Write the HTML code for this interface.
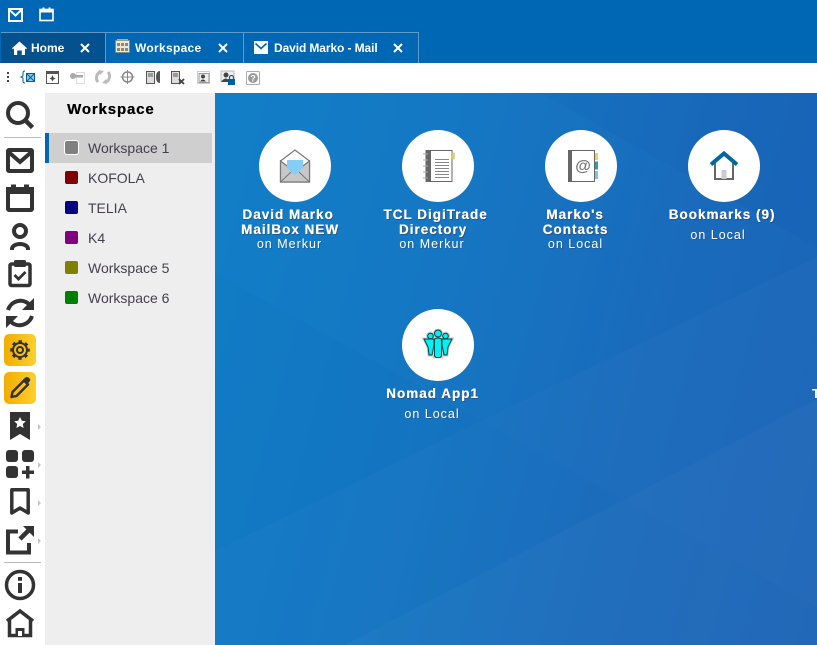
<!DOCTYPE html>
<html><head><meta charset="utf-8"><style>
*{box-sizing:border-box}
html,body{margin:0;padding:0;width:817px;height:645px;overflow:hidden;background:#fff;font-family:"Liberation Sans",sans-serif}
.a{position:absolute}
#top{left:0;top:0;width:817px;height:63px;background:#0067b5}
.tab{position:absolute;top:32px;height:31px;border:1px solid #5c9ac9;border-bottom:none;border-left:none;color:#fff;font-size:12px;font-weight:bold;line-height:30px}
.tab span{position:absolute;top:0;white-space:nowrap}
.tab svg{position:absolute}
.item{position:absolute;left:45px;width:167px;height:30px;font-size:14px;color:#453f4c;line-height:30px;padding-left:43px}
.sw{position:absolute;left:20px;top:8px;width:13px;height:13px;border-radius:2px}
#main{left:215px;top:93px;width:602px;height:552px;overflow:hidden;background:linear-gradient(105deg,#117fc7 0%,#1577c3 35%,#1a6abb 70%,#1b63b7 100%)}
.c{position:absolute;width:72px;height:72px;border-radius:50%;background:#fff}
.l{position:absolute;transform:translateX(-50%);color:#fff;line-height:15px;white-space:nowrap}
.b{font-size:13.5px;font-weight:bold;letter-spacing:1px;text-shadow:.3px 0 0 #fff,1px 1px 0 rgba(70,40,60,.45)}
.n{font-size:12.5px;letter-spacing:1px;text-shadow:1px 1px 0 rgba(70,40,60,.3)}
</style></head><body>
<div class="a" id="top"></div>
<svg class="a" style="left:8px;top:8px" width="15" height="14" viewBox="0 0 15 14"><rect x="1" y="1" width="13" height="12" fill="none" stroke="#fff" stroke-width="2"/><path d="M1 1.500 7.500 7.500 14 1.500" fill="none" stroke="#fff" stroke-width="2"/></svg>
<svg class="a" style="left:39px;top:7px" width="15" height="15" viewBox="0 0 15 15"><rect x="1" y="2.500" width="13" height="11" fill="none" stroke="#fff" stroke-width="1.600"/><rect x="1" y="3" width="13" height="2.500" fill="#fff"/><rect x="3.500" y="0.500" width="2" height="3" fill="#fff"/><rect x="9.500" y="0.500" width="2" height="3" fill="#fff"/></svg>

<div class="tab" style="left:1px;width:105px;background:#03528f"><svg style="left:11px;top:8px" width="15" height="15" viewBox="0 0 15 15"><path d="M7.500 .5 15 7.200l-1 1-1-.8V14H9.800V9.500H5.200V14H2V7.400l-1 .8-1-1z" fill="#fff"/><path d="M6.300 10.500h2.400V14H6.300z" fill="#03528f"/></svg><span style="left:30px">Home</span><svg style="left:79px;top:10px" width="10" height="10" viewBox="0 0 10 10"><path d="m1 1 8 8m0-8-8 8" stroke="#fff" stroke-width="2"/></svg></div>
<div class="tab" style="left:106px;width:138px"><svg style="left:9px;top:5px" width="16" height="16" viewBox="0 0 16 16"><rect x=".5" y="2.500" width="14" height="12" fill="#ece8dc" stroke="#888"/><path d="M2 1h11v1.500H2z" fill="#9b9"/><path d="M2 5h3v3H2zM6 5h3v3H6zM10 5h3v3h-3zM2 10h3v3H2zM6 10h3v3H6zM10 10h3v3h-3z" fill="#8a8a70"/></svg><span style="left:29px;letter-spacing:.3px">Workspace</span><svg style="left:112px;top:10px" width="10" height="10" viewBox="0 0 10 10"><path d="m1 1 8 8m0-8-8 8" stroke="#fff" stroke-width="2"/></svg></div>
<div class="tab" style="left:244px;width:175px"><svg style="left:10px;top:8px" width="15" height="14" viewBox="0 0 15 14"><rect width="14" height="13" fill="#fff"/><path d="M1.500 2.500 7 7.500l5.500-5" fill="none" stroke="#0067b5" stroke-width="1.600"/></svg><span style="left:30px;letter-spacing:-.1px">David Marko - Mail</span><svg style="left:149px;top:10px" width="10" height="10" viewBox="0 0 10 10"><path d="m1 1 8 8m0-8-8 8" stroke="#fff" stroke-width="2"/></svg></div>

<!-- toolbar -->
<svg class="a" style="left:0;top:63px" width="270" height="30" viewBox="0 0 270 30">
<path d="M7 9h2v2H7zM7 13h2v2H7zM7 17h2v2H7z" fill="#444"/>
<path d="M25 8q-2 0-2 2v3l-2 1 2 1v3q0 2 2 2" fill="none" stroke="#00609f"/><rect x="26.500" y="10.500" width="8" height="8" fill="#8cc6ea" stroke="#00609f"/><path d="m27 11 7 7m0-7-7 7" stroke="#00609f"/>
<rect x="46.500" y="8.500" width="12" height="12" fill="#fff" stroke="#555"/><rect x="46" y="8" width="13" height="3" fill="#555"/><path d="M52.500 12l1 2.500 2 1-2 1-1 2-1-2-2-1 2-1z" fill="#444"/>
<rect x="76.500" y="9.500" width="8" height="11" fill="#fff" stroke="#ddd"/><circle cx="73" cy="13" r="3" fill="#aaa"/><rect x="74" y="12" width="9" height="2.500" fill="#aaa"/>
<path d="M98 19a6.500 6.500 0 0 1 2-10M108 9a6.500 6.500 0 0 1-2 10" fill="none" stroke="#bbb" stroke-width="3"/><path d="M99 7l5 1-4 4zM107 21l-5-1 4-4z" fill="#bbb"/>
<circle cx="127.500" cy="14" r="5" fill="none" stroke="#888" stroke-width="1.500"/><path d="M127.500 7v14M120.500 14h14" stroke="#888"/>
<rect x="146.500" y="8.500" width="8" height="12" fill="#ddd" stroke="#555"/><path d="M148 11h5M148 13h5" stroke="#555"/><path d="M160 8q-4 0-4 6t4 6z" fill="#555"/>
<rect x="171.500" y="8.500" width="8" height="12" fill="#ddd" stroke="#555"/><path d="M173 11h5M173 13h5" stroke="#555"/><path d="m179 16 5 5m0-5-5 5" stroke="#444" stroke-width="1.800"/>
<rect x="197.500" y="8.500" width="12" height="12" fill="#fff" stroke="#ccc"/><rect x="199" y="10.500" width="10" height="9" fill="#eee" stroke="#999"/><circle cx="203" cy="13.500" r="2" fill="#444"/><path d="M200 18.500q3-4 6 0z" fill="#444"/>
<rect x="221" y="8" width="13" height="10" fill="#eee" stroke="#bbb"/><circle cx="226" cy="12" r="2.500" fill="#444"/><path d="M221 19q5-7 9 0z" fill="#444"/><rect x="228" y="16" width="7" height="6" fill="#00609f"/><path d="M229.500 16v-1.500a2 2 0 0 1 4 0V16" fill="none" stroke="#00609f" stroke-width="1.200"/>
<rect x="246.500" y="8.500" width="13" height="13" rx="1" fill="#fff" stroke="#aaa"/><circle cx="253" cy="15" r="5" fill="#999"/><text x="253" y="18.500" text-anchor="middle" font-size="9" font-weight="bold" fill="#fff" font-family="Liberation Sans">?</text>
</svg>

<!-- left rail -->
<svg class="a" style="left:0;top:93px" width="45" height="552" viewBox="0 93 45 552">
<g fill="none" stroke="#333" stroke-width="4">
<circle cx="18" cy="113" r="10"/><path d="m25.500 120.500 7 7" stroke-width="4.500"/>
<rect x="8" y="150" width="24" height="21" rx="1"/><path d="M8 151.500l12 10.500 12-10.500"/>
<rect x="8" y="189" width="24" height="21" rx="1"/>
<circle cx="20" cy="231" r="6"/><path d="M12 250v-1a8 5 0 0 1 16 0v1"/>
<rect x="10" y="264" width="20" height="21.500" rx="1.500" stroke-width="3.500"/><path d="m14.500 275 4 4 7-7" stroke-width="2.800"/>
<path d="M8 310a13 13 0 0 1 21-6M32 316a13 13 0 0 1-21 6"/>
<circle cx="20" cy="585" r="13.500" stroke-width="3.500"/>
<path d="M7 621 20 611l13 10M9.500 620v15.500h21V620" stroke-width="3.500"/>
</g>
<path d="M15.500 636v-8h9v8z" fill="#333"/><rect x="18" y="631" width="4" height="5" fill="#fff"/>
<path d="M6 187h28v7H6z" fill="#333"/>
<rect x="11" y="184.500" width="5" height="4" fill="#333"/><rect x="24" y="184.500" width="5" height="4" fill="#333"/>
<rect x="14" y="260" width="12" height="7" rx="1.500" fill="#333"/>
<path d="M34 298v12H22zM6 328v-12h12z" fill="#333"/>
<defs><linearGradient id="y" x1="0" x2="1"><stop offset="0" stop-color="#f3ab00"/><stop offset="1" stop-color="#fdd02e"/></linearGradient></defs>
<rect x="4" y="334" width="32" height="32" rx="5" fill="url(#y)"/>
<rect x="4" y="372" width="32" height="32" rx="5" fill="url(#y)"/>
<circle cx="20" cy="350" r="3" fill="none" stroke="#333" stroke-width="2"/><circle cx="20" cy="350" r="7" fill="none" stroke="#333" stroke-width="2"/><circle cx="20" cy="350" r="8.800" fill="none" stroke="#333" stroke-width="2" stroke-dasharray="3.400 3.500" stroke-dashoffset="1.700"/>
<path d="m11.500 397 1-5 11.500-11.500 4 4L16.500 396z" fill="none" stroke="#333" stroke-width="2.400" stroke-linejoin="round"/><path d="m23 379.500 2.500-2q1.500-1 3 0l1 1q1.500 1.500 0 3l-2 2.500z" fill="#333"/>
<path d="M10 412h20v28l-10-6-10 6z" fill="#333"/><path d="m20 417 1.800 3.700 4 .5-3 2.800.8 4-3.600-2-3.600 2 .8-4-3-2.800 4-.5z" fill="#fff"/>
<rect x="6" y="450" width="12" height="12" rx="3" fill="#333"/><rect x="22" y="450" width="12" height="12" rx="3" fill="#333"/><rect x="6" y="466" width="12" height="12" rx="3" fill="#333"/><path d="M26 466h3.500v4.500H34v3.500h-4.500v4.500H26V474h-4v-3.500h4z" fill="#333"/>
<path d="M11.800 489.800h16.400v23.200l-8.200-5-8.200 5z" fill="none" stroke="#333" stroke-width="3.500" stroke-linejoin="round"/>
<path d="M18 531.500H8v21h21V543" fill="none" stroke="#333" stroke-width="4"/><path d="m20 539 10-10" stroke="#333" stroke-width="4.500"/><path d="M23 526h11v11z" fill="#333"/>
<rect x="18" y="583" width="4" height="10" fill="#333"/><rect x="18" y="577" width="4" height="3.800" fill="#333"/>
<path d="M4 137.500h37M4 562.500h37" stroke="#bbb"/>
<path d="M38 424v6l3-3zM38 462v6l3-3zM38 500v6l3-3zM38 538v6l3-3z" fill="#c4c4c4"/>
</svg>

<!-- side panel -->
<div class="a" style="left:45px;top:93px;width:170px;height:552px;background:#eee"></div>
<div class="a" style="left:67px;top:101px;font-size:15px;font-weight:bold;color:#000;letter-spacing:.85px;text-shadow:.3px 0 0 #000">Workspace</div>
<div class="a" style="left:45px;top:133px;width:167px;height:30px;background:#cfcfcf;border-left:4px solid #0067b5"></div>
<div class="item" style="top:133px"><i class="sw" style="background:#808080;outline:1px solid #fff"></i>Workspace 1</div>
<div class="item" style="top:163px"><i class="sw" style="background:#800000"></i>KOFOLA</div>
<div class="item" style="top:193px"><i class="sw" style="background:#000080"></i>TELIA</div>
<div class="item" style="top:223px"><i class="sw" style="background:#800080"></i>K4</div>
<div class="item" style="top:253px"><i class="sw" style="background:#808000"></i>Workspace 5</div>
<div class="item" style="top:283px"><i class="sw" style="background:#008000"></i>Workspace 6</div>

<!-- main -->
<div class="a" id="main">
<svg class="a" style="left:0;top:0" width="602" height="552" viewBox="0 0 602 552">
<path d="M326 0 602 155V0z" fill="#0a50a8" opacity=".08"/>
<path d="M0 180 602 514V552H0z" fill="#0060a8" opacity=".05"/>
<path d="M0 458 602 164V552H0z" fill="#fff" opacity=".02"/>
<path d="M130 552 602 306V552z" fill="#fff" opacity=".025"/>
</svg>

<div class="c" style="left:44px;top:37px"></div>
<svg class="a" style="left:64px;top:55px" width="32" height="36" viewBox="0 0 32 36"><path d="M1.500 13 16 2l14.500 11v21H1.500z" fill="#fff" stroke="#777" stroke-width="1.200"/><path d="M1.500 13 16 24l14.500-11v21H1.500z" fill="#c8c8c8" stroke="#777" stroke-width="1.200"/><path d="M8 12h16v8l-8 7-8-7z" fill="#85cdf5"/><path d="M1.500 34 12 24M30.500 34 20 24" stroke="#777" fill="none"/></svg>
<div class="l b" style="left:73px;top:114px">David Marko</div>
<div class="l b" style="left:75px;top:129px">MailBox NEW</div>
<div class="l n" style="left:74.500px;top:144px">on Merkur</div>

<div class="c" style="left:187px;top:37px"></div>
<svg class="a" style="left:207px;top:55px" width="34" height="36" viewBox="0 0 34 36"><rect x="4" y="2.500" width="26" height="31" fill="#fff" stroke="#666"/><rect x="4" y="2" width="5" height="32" fill="#666"/><rect x="30" y="5" width="2.500" height="6" fill="#f5d33c" stroke="#aaa" stroke-width=".4"/><path d="M13 11.500h14M13 14.500h14M13 17.500h14M13 20.500h14M13 23.500h14M13 26.500h14M13 29.500h14" stroke="#888"/><path d="M1 6h5M1 12h5M1 18h5M1 24h5M1 30h5" stroke="#aaa"/></svg>
<div class="l b" style="left:220.500px;top:114px">TCL DigiTrade</div>
<div class="l b" style="left:218px;top:129px">Directory</div>
<div class="l n" style="left:217px;top:144px">on Merkur</div>

<div class="c" style="left:330px;top:37px"></div>
<svg class="a" style="left:351px;top:55px" width="32" height="36" viewBox="0 0 32 36"><rect x="2.500" y="2.500" width="26" height="31" fill="#fff" stroke="#666"/><rect x="2" y="2" width="4" height="32" fill="#666"/><rect x="29" y="5" width="3" height="7" fill="#f5d33c"/><rect x="29" y="13.500" width="3" height="8" fill="#1aa79c"/><rect x="29" y="23" width="3" height="8" fill="#7cc3ee"/><text x="17" y="23" text-anchor="middle" font-size="16" font-weight="bold" fill="#777" font-family="Liberation Sans">@</text></svg>
<div class="l b" style="left:360px;top:114px">Marko's</div>
<div class="l b" style="left:360.500px;top:129px">Contacts</div>
<div class="l n" style="left:360.500px;top:144px">on Local</div>

<div class="c" style="left:473px;top:37px"></div>
<svg class="a" style="left:494px;top:58px" width="30" height="30" viewBox="0 0 30 30"><path d="M6 11V28H24V11" fill="none" stroke="#666" stroke-width="2"/><rect x="12.500" y="19" width="5" height="9" fill="#ccc"/><path d="M2 13.500 15 2.500l13 11" fill="none" stroke="#00679f" stroke-width="4"/></svg>
<div class="l b" style="left:507px;top:114px">Bookmarks (9)</div>
<div class="l n" style="left:503px;top:135px">on Local</div>

<div class="c" style="left:187px;top:216px"></div>
<svg class="a" style="left:206px;top:236px" width="34" height="32" viewBox="0 0 34 32">
<g fill="#bbb" stroke="#ccc" stroke-width="3"><circle cx="9.500" cy="7" r="3"/><circle cx="24.500" cy="7" r="3"/><circle cx="17" cy="4.500" r="3.500"/><path d="M3 10h10v6l-2 10H8l-1-8zM21 10h10l-4 8-1 8h-3l-2-10z"/><path d="M13 10h8v18h-8z"/></g>
<g fill="#00f0f5" stroke="#044" stroke-width="1"><circle cx="9.500" cy="7" r="2.800"/><circle cx="24.500" cy="7" r="2.800"/><path d="M3 10h10v6l-2 10H8l-1-8zM21 10h10l-4 8-1 8h-3l-2-10z"/><circle cx="17" cy="4.500" r="3.500"/><path d="M13.500 10q3.500-2 7 0v17l-1.500 1.500h-4L13.500 27z"/></g></svg>
<div class="l b" style="left:217.500px;top:293px">Nomad App1</div>
<div class="l n" style="left:217px;top:314px">on Local</div>

<div class="a" style="left:597px;top:293px;color:#fff;font-size:13px;font-weight:bold;line-height:15px">T</div>
</div>
</body></html>
